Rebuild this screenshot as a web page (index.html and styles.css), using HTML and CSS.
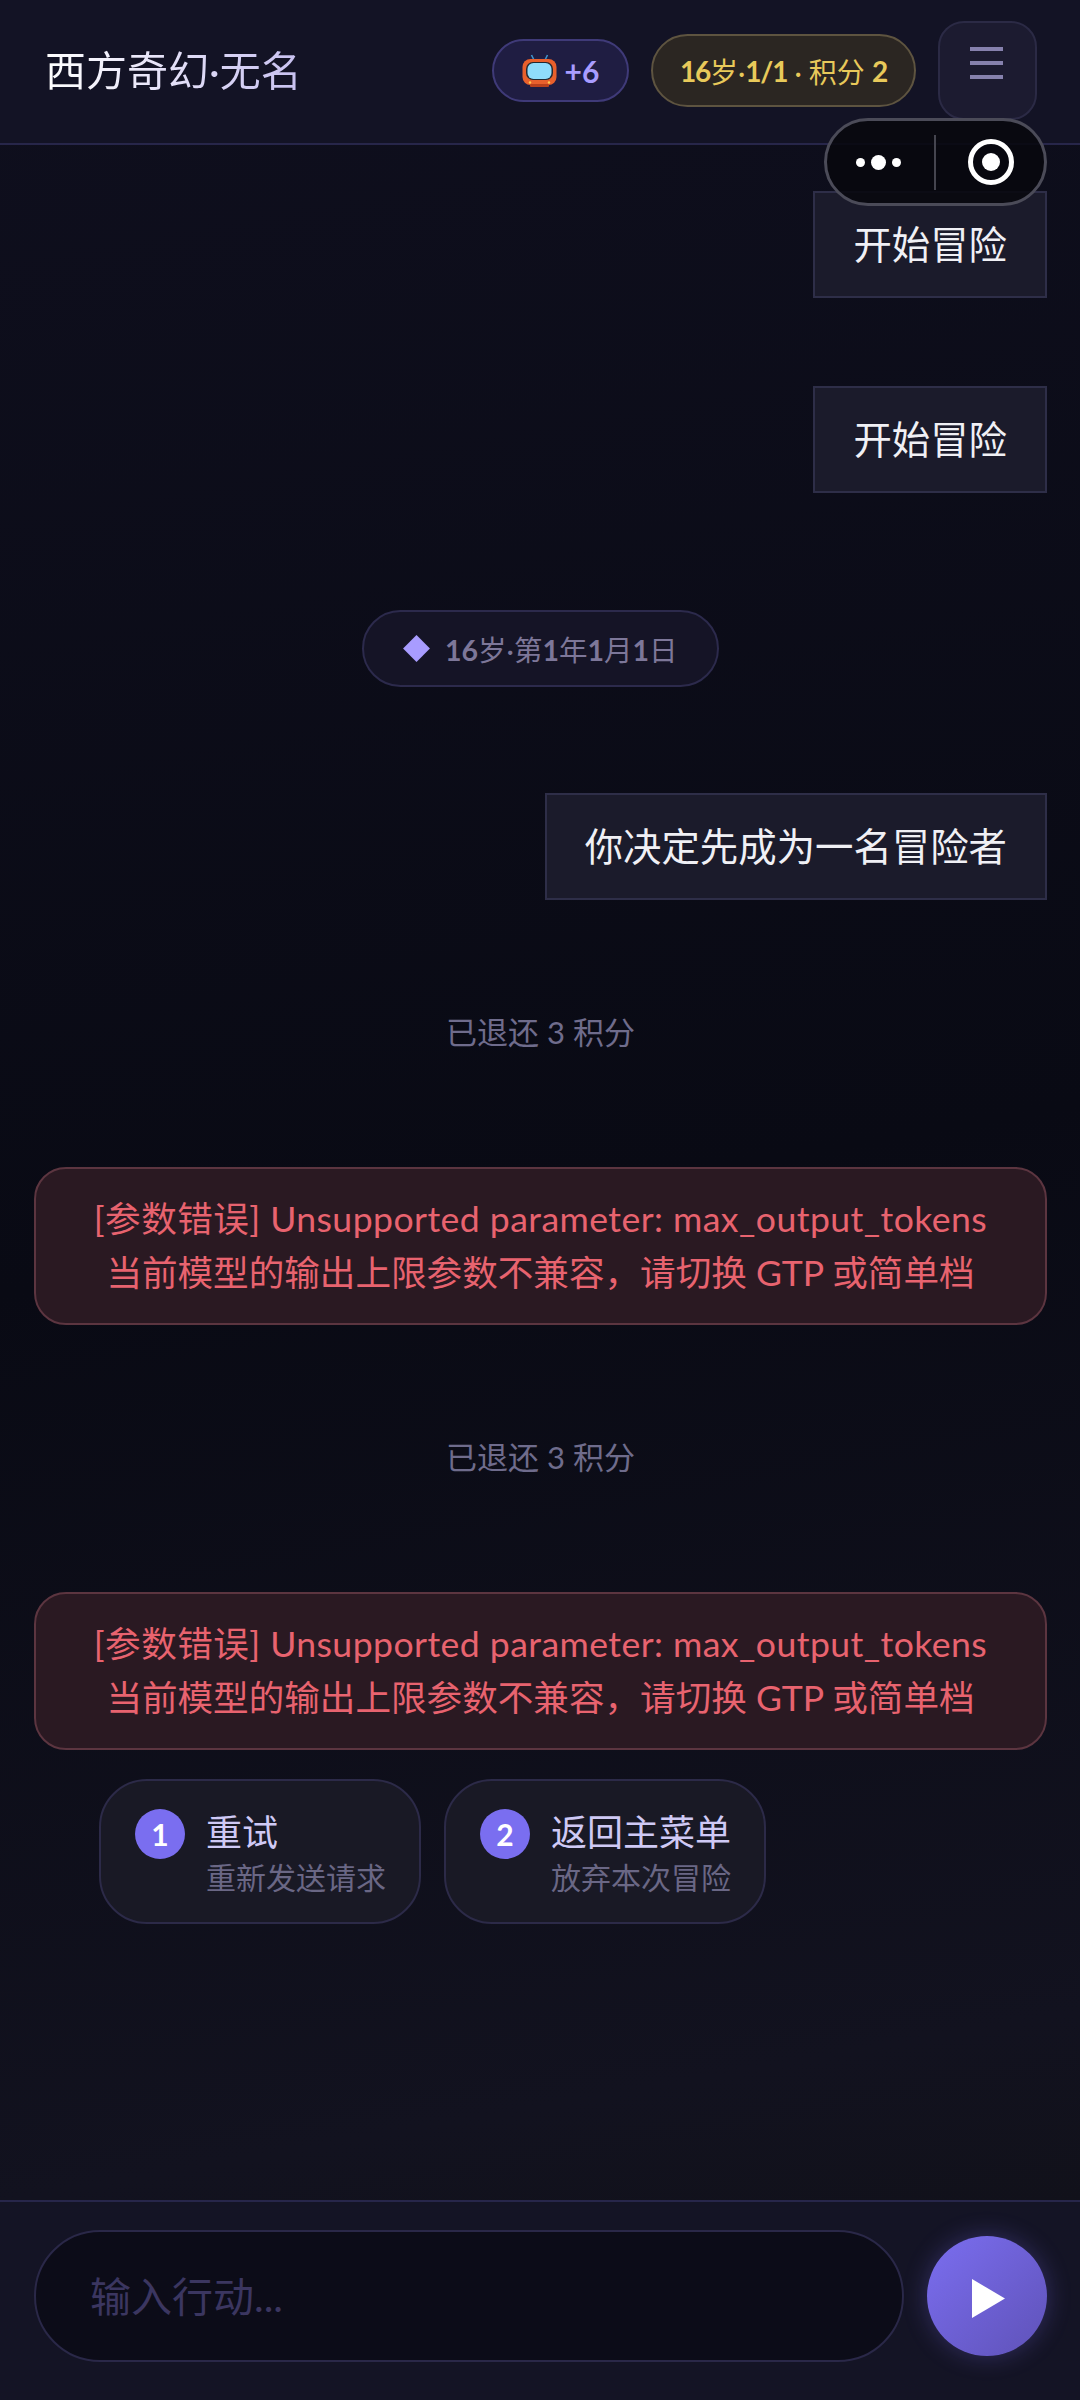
FILE: index.html
```html
<!DOCTYPE html>
<html lang="zh-CN">

<head>
    <meta charset="UTF-8">
    <meta name="viewport" content="width=device-width, initial-scale=1.0">
    <title>西方奇幻·无名</title>
    <link rel="stylesheet" href="styles.css">
</head>

<body>
    <header class="top-bar">
        <h1 class="game-title">西方奇幻·无名</h1>
        <div class="ad-pill">
            <svg class="tv-icon" viewBox="0 0 35 33" width="35" height="33" aria-hidden="true">
                <path d="M12 6 9.5 1M23 6l2.5-5" stroke="#3f93c9" stroke-width="1.6" fill="none"/>
                <rect x="0.5" y="5" width="34" height="26" rx="8" fill="#e8602c"/>
                <rect x="8" y="30" width="19" height="3" rx="1" fill="#b8401c"/>
                <rect x="4" y="8" width="27" height="18" rx="7" fill="#222a33"/>
                <rect x="5.5" y="9" width="24" height="16" rx="6" fill="#8fdcfb"/>
                <circle cx="8" cy="28.5" r="1.2" fill="#ffc94d"/>
                <circle cx="27" cy="28.5" r="1.2" fill="#ffc94d"/>
            </svg>
            <b>+6</b>
        </div>
        <div class="score-pill"><b>16</b>岁·<b>1/1</b> · 积分 <b>2</b></div>
        <button class="menu-btn" aria-label="菜单">
            <span></span>
            <span></span>
            <span></span>
        </button>
    </header>

    <!-- mini program capsule sits over the header -->
    <div class="capsule">
        <div class="capsule-dots">
            <i class="dot"></i>
            <i class="dot dot-big"></i>
            <i class="dot"></i>
        </div>
        <div class="capsule-line"></div>
        <div class="capsule-target"><i></i></div>
    </div>

    <main class="chat">
        <div class="bubble">开始冒险</div>
        <div class="bubble bubble-second">开始冒险</div>

        <div class="date-pill">
            <i class="diamond"></i>
            <span><b>16</b>岁·第<b>1</b>年<b>1</b>月<b>1</b>日</span>
        </div>

        <div class="bubble bubble-action">你决定先成为一名冒险者</div>

        <p class="refund">已退还 3 积分</p>
        <div class="error-box">
            <p class="error-en">[参数错误] Unsupported parameter: max_output_tokens</p>
            <p>当前模型的输出上限参数不兼容，请切换 GTP 或简单档</p>
        </div>

        <p class="refund">已退还 3 积分</p>
        <div class="error-box">
            <p class="error-en">[参数错误] Unsupported parameter: max_output_tokens</p>
            <p>当前模型的输出上限参数不兼容，请切换 GTP 或简单档</p>
        </div>

        <div class="options">
            <div class="option">
                <span class="option-num">1</span>
                <div>
                    <div class="option-title">重试</div>
                    <div class="option-sub">重新发送请求</div>
                </div>
            </div>
            <div class="option">
                <span class="option-num">2</span>
                <div>
                    <div class="option-title">返回主菜单</div>
                    <div class="option-sub">放弃本次冒险</div>
                </div>
            </div>
        </div>
    </main>

    <footer class="composer">
        <input class="action-input" type="text" placeholder="输入行动...">
        <button class="send-btn" aria-label="发送">
            <svg viewBox="0 0 33 39" width="33" height="39" aria-hidden="true">
                <polygon points="0,0 33,19.5 0,39" fill="#fff"/>
            </svg>
        </button>
    </footer>
</body>

</html>
```

FILE: styles.css
```css
* {
    box-sizing: border-box;
}

body {
    margin: 0;
    width: 1080px;
    height: 2400px;
    display: flex;
    flex-direction: column;
    position: relative;
    overflow: hidden;
    font-family: "Lato", "Noto Sans CJK SC", sans-serif;
    background: linear-gradient(170deg, #0f0f1e 0%, #090a14 50%, #12121f 85%, #101015 100%);
    color: #f0f0f5;
}

b {
    font-weight: 700;
}

/* header */
.top-bar {
    height: 145px;
    flex-shrink: 0;
    display: flex;
    align-items: center;
    gap: 22px;
    padding: 0 43px 2px 45px;
    background-color: #131325;
    border-bottom: 2px solid #27264a;
}

.game-title {
    margin: 0 auto 0 0;
    font-size: 41px;
    font-weight: 400;
    line-height: 1.2;
    background: linear-gradient(90deg, #ffffff, #c7c0f0);
    -webkit-background-clip: text;
    background-clip: text;
    color: transparent;
}

.ad-pill {
    width: 137px;
    height: 63px;
    display: flex;
    align-items: center;
    justify-content: center;
    gap: 8px;
    font-size: 30px;
    color: #a89cff;
    background-color: #1f1d42;
    border: 2px solid #3f3a78;
    border-radius: 32px;
}

.score-pill {
    width: 265px;
    height: 73px;
    display: flex;
    align-items: center;
    justify-content: center;
    white-space: pre;
    font-size: 28px;
    color: #e8c95a;
    background-color: #2b2622;
    border: 2px solid #5e5440;
    border-radius: 37px;
}

.score-pill b {
    letter-spacing: -1.2px;
}

.menu-btn {
    width: 99px;
    height: 99px;
    padding: 24px 2px 0 0;
    display: flex;
    flex-direction: column;
    align-items: center;
    gap: 10px;
    background-color: #1c1b30;
    border: 2px solid #2b2a45;
    border-radius: 26px;
}

.menu-btn span {
    width: 33px;
    height: 4px;
    background-color: #8681ad;
}

/* capsule */
.capsule {
    position: absolute;
    top: 118px;
    left: 824px;
    width: 223px;
    height: 88px;
    display: flex;
    align-items: center;
    background-color: rgba(8, 8, 14, 0.88);
    border: 3px solid #4b4b58;
    border-radius: 44px;
}

.capsule-dots {
    width: 107px;
    padding-right: 4px;
    display: flex;
    align-items: center;
    justify-content: center;
    gap: 6px;
}

.dot {
    width: 9px;
    height: 9px;
    border-radius: 50%;
    background-color: #fff;
}

.dot-big {
    width: 15px;
    height: 15px;
}

.capsule-line {
    width: 2px;
    height: 55px;
    background-color: #45454f;
}

.capsule-target {
    width: 46px;
    height: 46px;
    margin-left: 32px;
    display: flex;
    align-items: center;
    justify-content: center;
    border: 5px solid #fff;
    border-radius: 50%;
}

.capsule-target i {
    width: 18px;
    height: 18px;
    border-radius: 50%;
    background-color: #fff;
}

/* messages */
.chat {
    flex: 1;
    display: flex;
    flex-direction: column;
    padding: 46px 33px 0 34px;
}

.bubble {
    align-self: flex-end;
    padding: 21px 38px;
    font-size: 38.4px;
    line-height: 61px;
    background-color: #1b1b2b;
    border: 2px solid #2e2e48;
}

.bubble-second {
    margin-top: 88px;
}

.bubble-action {
    margin-top: 106px;
}

.date-pill {
    align-self: center;
    width: 357px;
    height: 77px;
    margin-top: 117px;
    display: flex;
    align-items: center;
    gap: 19px;
    padding-left: 43px;
    font-size: 28.5px;
    color: #7d7799;
    background-color: #151426;
    border: 2px solid #2c2a4c;
    border-radius: 39px;
}

.diamond {
    width: 19px;
    height: 19px;
    background-color: #a89cff;
    transform: rotate(45deg);
}

.refund {
    margin: 112px 0 115px;
    font-size: 31px;
    line-height: 40px;
    text-align: center;
    color: #6f6c8c;
}

.error-box {
    padding: 23px 20px;
    font-size: 35.6px;
    line-height: 54px;
    text-align: center;
    color: #e8636f;
    background-color: #2a1922;
    border: 2px solid #5c3540;
    border-radius: 32px;
}

.error-box p {
    margin: 0;
}

.error-box .error-en {
    letter-spacing: 0.45px;
}

.options {
    display: flex;
    gap: 23px;
    margin-top: 29px;
    padding-left: 65px;
}

.option {
    height: 145px;
    display: flex;
    gap: 21px;
    padding: 28px 33px 0 34px;
    background-color: #191925;
    border: 2px solid #2c2a48;
    border-radius: 48px;
}

.option-num {
    width: 50px;
    height: 50px;
    display: flex;
    align-items: center;
    justify-content: center;
    font-size: 30px;
    font-weight: 700;
    color: #fff;
    background-color: #7a6ef0;
    border-radius: 50%;
}

.option-title {
    font-size: 36px;
    line-height: 46px;
    color: #cfc9f5;
}

.option-sub {
    font-size: 30px;
    line-height: 44px;
    color: #6a6785;
}

/* bottom input */
.composer {
    height: 200px;
    flex-shrink: 0;
    display: flex;
    gap: 23px;
    padding: 28px 33px 0 34px;
    background-color: #141425;
    border-top: 2px solid #27264a;
}

.action-input {
    width: 870px;
    height: 132px;
    padding: 0 54px;
    font-family: inherit;
    font-size: 41px;
    color: #f0f0f5;
    background-color: #0c0c18;
    border: 2px solid #2a2848;
    border-radius: 66px;
    outline: none;
}

.action-input::placeholder {
    color: #3b3660;
}

.send-btn {
    width: 120px;
    height: 120px;
    margin-top: 6px;
    display: flex;
    align-items: center;
    justify-content: center;
    padding: 4px 0 0 3px;
    background: linear-gradient(135deg, #7b6ef0, #5f52b8);
    border: none;
    border-radius: 50%;
    box-shadow: 0 0 24px rgba(124, 110, 240, 0.3);
}
```
